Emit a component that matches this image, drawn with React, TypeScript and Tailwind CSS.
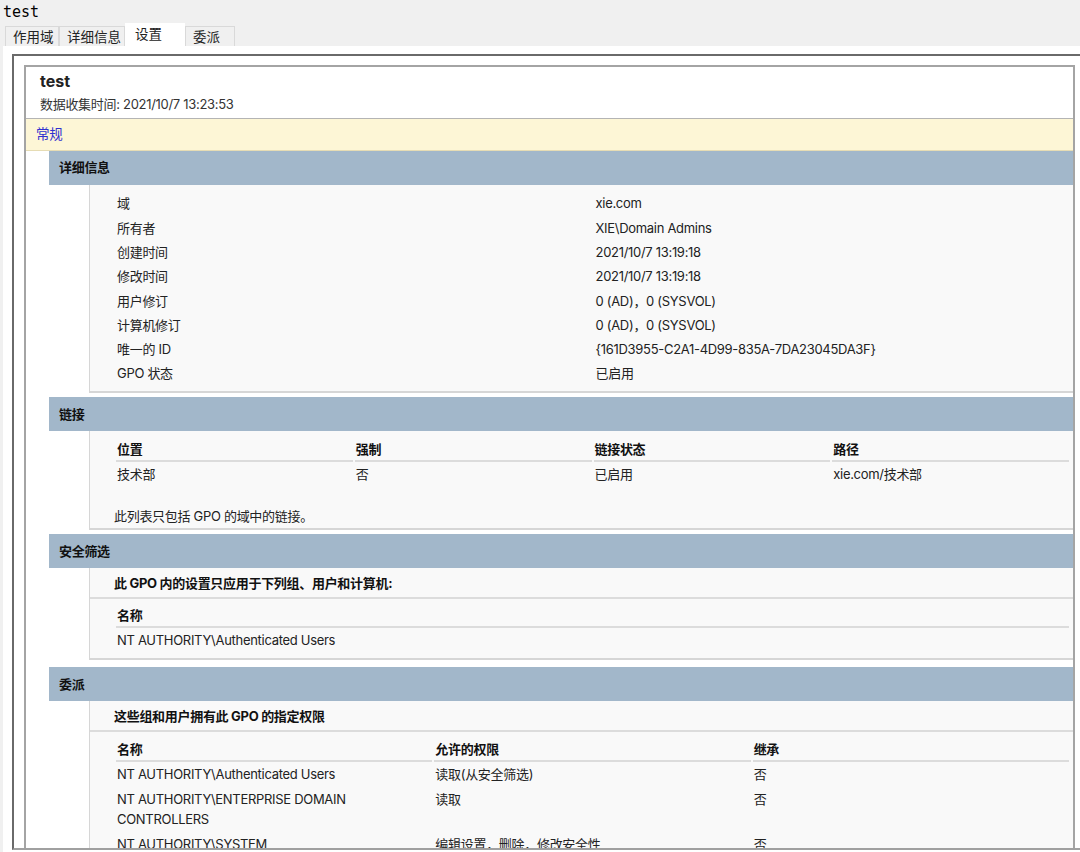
import type { ReactNode } from 'react'

const FONT = 'font-["Inter","Noto_Sans_CJK_SC",sans-serif]'

const details: [string, string][] = [
  ['域', 'xie.com'],
  ['所有者', 'XIE\\Domain Admins'],
  ['创建时间', '2021/10/7 13:19:18'],
  ['修改时间', '2021/10/7 13:19:18'],
  ['用户修订', '0 (AD)，0 (SYSVOL)'],
  ['计算机修订', '0 (AD)，0 (SYSVOL)'],
  ['唯一的 ID', '{161D3955-C2A1-4D99-835A-7DA23045DA3F}'],
  ['GPO 状态', '已启用'],
]

const delegation: [string, string, string][] = [
  ['NT AUTHORITY\\Authenticated Users', '读取(从安全筛选)', '否'],
  ['NT AUTHORITY\\ENTERPRISE DOMAIN CONTROLLERS', '读取', '否'],
  ['NT AUTHORITY\\SYSTEM', '编辑设置，删除，修改安全性', '否'],
]

function Section({ title, children, className = '' }: { title: string; children: ReactNode; className?: string }) {
  return (
    <section className={className}>
      <div className="ml-[23px] flex h-[34px] items-center bg-[#a2b7ca] pl-[10px] font-bold text-[#111]">{title}</div>
      <div className="ml-[63px] border-b-2 border-l border-[#d6d6d6] bg-[#f9f9f9]">{children}</div>
    </section>
  )
}

function Th({ children }: { children: ReactNode }) {
  return (
    <th className="border-b-2 border-[#dcdcdc] pt-[2px] pb-[1px] pl-[1px] text-left font-bold leading-5 text-[#111]">
      {children}
    </th>
  )
}

function Td({ children }: { children: ReactNode }) {
  return <td className="pt-[2px] pb-[3px] pl-[1px] align-top leading-5">{children}</td>
}

export default function App() {
  const tabs = ['作用域', '详细信息', '设置', '委派']
  return (
    <div className={`h-[852px] w-[1080px] overflow-hidden bg-[#f0f0f0] text-[13px] tracking-[-0.3px] text-[#222] ${FONT}`}>
      <div className="h-[23px] pl-[3px] pt-[2px] font-['DejaVu_Sans_Mono',monospace] text-[15px] leading-5 tracking-normal text-black">
        test
      </div>
      <div className="flex h-[23px] items-end pl-[5px] tracking-normal">
        {tabs.map((t) => {
          const active = t === '设置'
          const w = t === '作用域' ? 'w-[54px]' : t === '详细信息' ? 'w-[66px]' : t === '设置' ? 'w-[60px]' : 'w-[50px]'
          return (
            <div
              key={t}
              className={`${w} flex items-center pl-[7px] font-["Noto_Sans_CJK_SC",sans-serif] text-[13.5px] text-[#222] ${
                active
                  ? 'relative z-10 h-[24px] -mb-px bg-white pb-[3px] pl-[10px]'
                  : 'h-[20px] border border-b-0 border-[#d9d9d9] bg-[#f0f0f0]'
              }`}
            >
              {t}
            </div>
          )
        })}
      </div>
      <div className="ml-[3px] h-[806px] bg-white pl-[9px] pt-[8px]">
        <div className="h-[796px] overflow-hidden border-t-2 border-l-2 border-b-2 border-t-[#6a6a6a] border-l-[#6a6a6a] border-b-[#a0a0a0]">
          <div className="mt-[9px] mr-[5px] ml-[10px] border-2 border-b-0 border-[#a4a4a4] bg-white pb-10">
            <div className="px-[14px] pt-[4px] pb-[4px]">
              <div className="text-[16px] font-bold leading-5 tracking-normal text-[#222]">test</div>
              <div className="mt-[3px] leading-5 text-[#333]">数据收集时间: 2021/10/7 13:23:53</div>
            </div>
            <div className="flex h-[33px] items-center border-t border-b border-t-[#b4b4b4] border-b-[#e6dcb4] bg-[#fdf6d6] pl-[10px] text-[13.5px] text-[#3030d0]">
              常规
            </div>

            <Section title="详细信息" className="mb-[4px]">
              <div className="pt-[7px] pr-[2px] pb-[5px] pl-[26px]">
                <table className="w-full table-fixed">
                  <tbody>
                    {details.map(([k, v]) => (
                      <tr key={k} className="h-[24.3px]">
                        <td className="pl-[1px]">{k}</td>
                        <td className="pl-[2px]">{v}</td>
                      </tr>
                    ))}
                  </tbody>
                </table>
              </div>
            </Section>

            <Section title="链接" className="mb-[4px]">
              <div className="pt-[6px] pr-[2px] pb-[2px] pl-[24px]">
                <table className="w-full table-fixed border-separate [border-spacing:2px_0]">
                  <thead>
                    <tr>
                      <Th>位置</Th>
                      <Th>强制</Th>
                      <Th>链接状态</Th>
                      <Th>路径</Th>
                    </tr>
                  </thead>
                  <tbody>
                    <tr>
                      <Td>技术部</Td>
                      <Td>否</Td>
                      <Td>已启用</Td>
                      <Td>xie.com/技术部</Td>
                    </tr>
                  </tbody>
                </table>
                <p className="mt-[19px] leading-5">此列表只包括 GPO 的域中的链接。</p>
              </div>
            </Section>

            <Section title="安全筛选" className="mb-[7px]">
              <div className="border-b-2 border-[#dcdcdc] pt-[5px] pb-[4px] pl-[24px] font-bold leading-5 text-[#111]">
                此 GPO 内的设置只应用于下列组、用户和计算机:
              </div>
              <div className="pt-[4px] pr-[2px] pb-[5px] pl-[24px]">
                <table className="w-full table-fixed border-separate [border-spacing:2px_0]">
                  <thead>
                    <tr>
                      <Th>名称</Th>
                    </tr>
                  </thead>
                  <tbody>
                    <tr>
                      <Td>NT AUTHORITY\Authenticated Users</Td>
                    </tr>
                  </tbody>
                </table>
              </div>
            </Section>

            <Section title="委派">
              <div className="border-b-2 border-[#dcdcdc] pt-[5px] pb-[4px] pl-[24px] font-bold leading-5 text-[#111]">
                这些组和用户拥有此 GPO 的指定权限
              </div>
              <div className="pt-[5px] pr-[2px] pb-[5px] pl-[24px]">
                <table className="w-full table-fixed border-separate [border-spacing:2px_0]">
                  <thead>
                    <tr>
                      <Th>名称</Th>
                      <Th>允许的权限</Th>
                      <Th>继承</Th>
                    </tr>
                  </thead>
                  <tbody>
                    {delegation.map(([a, b, c]) => (
                      <tr key={a}>
                        <Td>{a}</Td>
                        <Td>{b}</Td>
                        <Td>{c}</Td>
                      </tr>
                    ))}
                  </tbody>
                </table>
              </div>
            </Section>
          </div>
        </div>
      </div>
    </div>
  )
}
